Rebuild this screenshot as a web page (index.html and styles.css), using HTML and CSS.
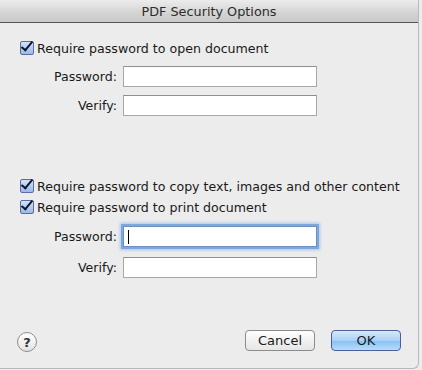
FILE: index.html
```html
<!doctype html>
<html>
<head>
 <meta http-equiv="Content-Type" content="text/html; charset=utf-8">
 <title>PDF Security Options</title>
<link rel="stylesheet" href="styles.css">
</head>

<body>
  <div id="sheet">
    <div class="titlebar">PDF Security Options</div>
    <div class="content">
      <label class="check first"><span class="box"></span>Require password to open document</label>
      <div class="field"><span class="lbl">Password:</span><span class="input"></span></div>
      <div class="field"><span class="lbl">Verify:</span><span class="input"></span></div>

      <label class="check gap"><span class="box"></span>Require password to copy text, images and other content</label>
      <label class="check"><span class="box"></span>Require password to print document</label>
      <div class="field wide"><span class="lbl">Password:</span><span class="input focus"><span class="caret"></span></span></div>
      <div class="field last"><span class="lbl">Verify:</span><span class="input"></span></div>
    </div>
    <div class="footer">
      <span class="help">?</span>
      <span class="btn">Cancel</span>
      <span class="btn ok">OK</span>
    </div>
  </div>
</body>
</html>
```

FILE: styles.css
```css
html,body{margin:0;padding:0;width:100%;height:100%;background:#ececec;}
body{font-family:'DejaVu Sans','Liberation Sans',sans-serif;font-size:12.6px;color:#1a1a1a;}
#sheet{width:419px;height:369px;background:#ececec;border-right:1px solid #b8b8b8;border-bottom:1px solid #b8b8b8;border-bottom-right-radius:6px;display:flex;flex-direction:column;box-sizing:border-box;}
.titlebar{height:22px;line-height:23px;text-align:center;font-size:12.8px;color:#2c2c2c;background:linear-gradient(#ececec,#d3d3d3 60%,#c9c9c9);border-bottom:1px solid #555;border-top-right-radius:5px;}
.content{padding:17px 0 0 20px;flex:1;display:flex;flex-direction:column;}
.check{display:flex;align-items:center;height:16px;margin-bottom:5px;}
.check.gap{margin-top:62px;}
.box{width:12px;height:12px;margin-right:3px;border:1px solid #5a6d9e;border-radius:2px;background:linear-gradient(#d5e2f7,#9ab8e8);position:relative;}
.box:after{content:'';position:absolute;left:3px;top:-3px;width:4px;height:10px;border:solid #0c1630;border-width:0 2px 2px 0;transform:rotate(40deg);}
.field{display:flex;align-items:center;height:21px;margin-top:8px;}
.check.first + .field{margin-top:5px;}
.field.wide{margin-top:6px;}
.field.last{margin-top:10px;}
.lbl{width:97px;text-align:right;padding-right:6px;}
.input{width:192px;height:19px;background:#fff;border:1px solid #a8a8a8;border-top-color:#8f8f8f;position:relative;}
.input.focus{box-shadow:0 0 0 2px #7ea8dc,0 0 3px 3px #a9c6ec;border-color:#6d8fc4;}
.caret{position:absolute;left:4px;top:3px;width:1px;height:14px;background:#000;}
.footer{height:48px;display:flex;align-items:flex-start;padding:10px 0 0 17px;box-sizing:border-box;}
.help{width:20px;height:20px;border-radius:50%;border:1px solid #8e8e8e;background:linear-gradient(#ffffff,#e3e3e3);box-sizing:border-box;text-align:center;line-height:19px;font-weight:bold;font-size:13px;color:#333;margin-top:2px;}
.btn{width:70px;height:21px;box-sizing:border-box;border:1px solid #8c8c8c;border-radius:4px;background:linear-gradient(#ffffff,#f1f1f1 50%,#e6e6e6);text-align:center;line-height:19px;font-size:13px;margin-left:208px;}
.btn.ok{margin-left:16px;border-color:#4d5e9a;background:linear-gradient(#d6e9fb,#a9d1f6 50%,#85c0f3 51%,#b7ddfb);}
```
